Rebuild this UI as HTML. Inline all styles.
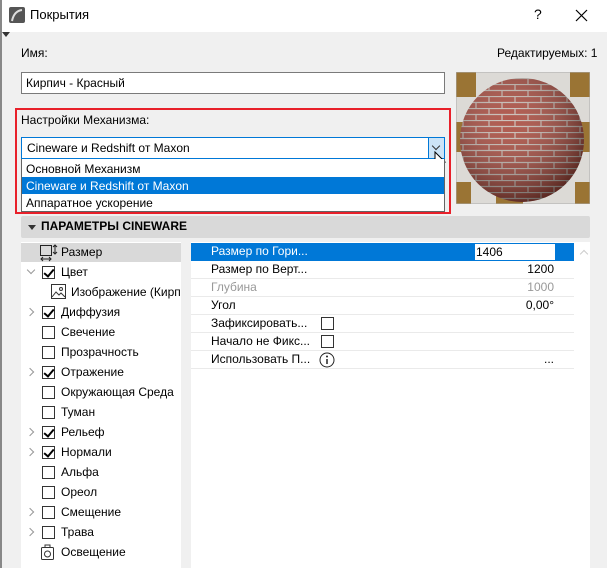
<!DOCTYPE html>
<html><head><meta charset="utf-8"><style>
*{margin:0;padding:0;box-sizing:border-box}
body{width:607px;height:568px;overflow:hidden;background:#f0f0f0;font-family:"Segoe UI","Liberation Sans","DejaVu Sans",sans-serif;font-size:12px;color:#000;position:relative}
.a{position:absolute}
.title{left:0;top:0;width:607px;height:32px;background:#fff}
.cb{position:absolute;width:13px;height:13px;border:1px solid #333;background:#fff}
.chk::after{content:"";position:absolute;left:3px;top:0px;width:4px;height:8px;border:solid #000;border-width:0 2px 2px 0;transform:rotate(40deg)}
.arr{position:absolute;width:6px;height:6px;border:solid #999;border-width:0 1.5px 1.5px 0}
.row{position:absolute;left:191px;width:383px;height:18px;border-bottom:1px solid #eaeaea;line-height:17px}
.row .l{position:absolute;left:20px}
.row .v{position:absolute;right:20px}
.lt{position:absolute;left:40px;line-height:20px;white-space:nowrap}
</style></head><body>
<div class="a title"></div>
<div class="a" style="left:0;top:0;width:2px;height:568px;background:#888"></div>
<div class="a" style="left:2px;top:32px;width:0;height:0;border-left:4px solid transparent;border-right:4px solid transparent;border-top:5px solid #333"></div>
<svg class="a" style="left:9px;top:7px" width="16" height="16"><rect x="0" y="0" width="16" height="16" rx="2" fill="#555"/><path d="M3 14 Q5 4 13 3" stroke="#ddd" stroke-width="2" fill="none"/></svg>
<div class="a" style="left:30px;top:7px;font-size:13px">Покрытия</div>
<div class="a" style="left:534px;top:6px;font-size:14px">?</div>
<svg class="a" style="left:575px;top:9px" width="13" height="13"><path d="M1 1L12 12M12 1L1 12" stroke="#000" stroke-width="1.2"/></svg>

<div class="a" style="left:21px;top:46px">Имя:</div>
<div class="a" style="left:497px;top:46px">Редактируемых: 1</div>
<div class="a" style="left:21px;top:72px;width:424px;height:22px;background:#fff;border:1px solid #7a7a7a;padding-left:4px;line-height:20px">Кирпич - Красный</div>

<div class="a" style="left:15px;top:108px;width:436px;height:106px;border:2px solid #e8202a"></div>
<div class="a" style="left:21px;top:113px">Настройки Механизма:</div>
<div class="a" style="left:21px;top:137px;width:424px;height:22px;background:#fff;border:1px solid #0078d7;padding-left:5px;line-height:20px">Cineware и Redshift от Maxon</div>
<div class="a" style="left:428px;top:137px;width:17px;height:22px;background:#cce4f7;border:1px solid #0078d7"></div>
<div class="arr" style="left:433px;top:143px;transform:rotate(45deg);border-color:#333;border-width:0 1px 1px 0"></div>
<svg class="a" style="left:434px;top:151px" width="14" height="20"><path d="M1 1L1 15L4 12L7 18L9 17L6 11L11 11Z" fill="#fff" stroke="#000"/></svg>
<div class="a" style="left:21px;top:159px;width:424px;height:53px;background:#fff;border:1px solid #646464;border-top:none"></div>
<div class="a" style="left:26px;top:161px;line-height:16px">Основной Механизм</div>
<div class="a" style="left:22px;top:177px;width:422px;height:17px;background:#0078d7"></div>
<div class="a" style="left:26px;top:178px;line-height:16px;color:#fff">Cineware и Redshift от Maxon</div>
<div class="a" style="left:26px;top:195px;line-height:16px">Аппаратное ускорение</div>

<svg class="a" style="left:456px;top:72px" width="134" height="132">
<defs>
<pattern id="br" width="26" height="12" patternUnits="userSpaceOnUse"><rect width="26" height="12" fill="#a8473a"/><path d="M0 0.5H26M0 6.5H26M7 0V6M20 6V12" stroke="#c8bcb4" stroke-width="1.2"/></pattern>
<radialGradient id="sh" cx="0.4" cy="0.35" r="0.7"><stop offset="0" stop-color="#fff" stop-opacity="0.1"/><stop offset="1" stop-color="#000" stop-opacity="0.5"/></radialGradient>
</defs>
<rect width="134" height="132" fill="#dcdad6"/>
<path d="M0 0H20V25H0ZM114 0H134V25H114ZM0 50H12V80H0ZM122 50H134V80H122ZM0 110H15V132H0ZM119 110H134V132H119ZM40 112H67V132H40ZM67 100H94V112H67Z" fill="#9a7434"/>
<rect x="0" y="0" width="134" height="132" fill="none" stroke="#aaa"/>
<circle cx="66" cy="68" r="62" fill="url(#br)"/>
<circle cx="66" cy="68" r="62" fill="url(#sh)"/>
</svg>

<div class="a" style="left:21px;top:216px;width:569px;height:22px;background:#d9d9d9;border-radius:2px"></div>
<div class="a" style="left:28px;top:225px;border-left:4px solid transparent;border-right:4px solid transparent;border-top:5px solid #333"></div>
<div class="a" style="left:41px;top:219px;font-weight:bold;font-size:12px">ПАРАМЕТРЫ CINEWARE</div>

<div class="a" style="left:21px;top:242px;width:160px;height:326px;background:#fff"></div>
<div class="a" style="left:21px;top:243px;width:160px;height:19px;background:#d9d9d9"></div>
<svg class="a" style="left:39px;top:244px" width="20" height="18"><rect x="1.5" y="1.5" width="11" height="10" fill="none" stroke="#222"/><path d="M16 1V10M14 3L16 1L18 3M14 8L16 10L18 8M2 15H12M4 13L2 15L4 17M10 13L12 15L10 17" stroke="#222" fill="none"/></svg>
<div class="a" style="left:21px;top:242px;width:160px;height:326px;overflow:hidden">
<div class="lt" style="top:0">Размер</div>
<div class="lt" style="top:20px">Цвет</div>
<div class="lt" style="top:40px;left:50px">Изображение (Кирпич</div>
<div class="lt" style="top:60px">Диффузия</div>
<div class="lt" style="top:80px">Свечение</div>
<div class="lt" style="top:100px">Прозрачность</div>
<div class="lt" style="top:120px">Отражение</div>
<div class="lt" style="top:140px">Окружающая Среда</div>
<div class="lt" style="top:160px">Туман</div>
<div class="lt" style="top:180px">Рельеф</div>
<div class="lt" style="top:200px">Нормали</div>
<div class="lt" style="top:220px">Альфа</div>
<div class="lt" style="top:240px">Ореол</div>
<div class="lt" style="top:260px">Смещение</div>
<div class="lt" style="top:280px">Трава</div>
<div class="lt" style="top:300px">Освещение</div>
</div>
<div class="cb chk" style="left:42px;top:266px"></div>
<div class="cb chk" style="left:42px;top:306px"></div>
<div class="cb" style="left:42px;top:326px"></div>
<div class="cb" style="left:42px;top:346px"></div>
<div class="cb chk" style="left:42px;top:366px"></div>
<div class="cb" style="left:42px;top:386px"></div>
<div class="cb" style="left:42px;top:406px"></div>
<div class="cb chk" style="left:42px;top:426px"></div>
<div class="cb chk" style="left:42px;top:446px"></div>
<div class="cb" style="left:42px;top:466px"></div>
<div class="cb" style="left:42px;top:486px"></div>
<div class="cb" style="left:42px;top:506px"></div>
<div class="cb" style="left:42px;top:526px"></div>
<div class="arr" style="left:28px;top:267px;transform:rotate(45deg)"></div>
<div class="arr" style="left:27px;top:309px;transform:rotate(-45deg)"></div>
<div class="arr" style="left:27px;top:369px;transform:rotate(-45deg)"></div>
<div class="arr" style="left:27px;top:429px;transform:rotate(-45deg)"></div>
<div class="arr" style="left:27px;top:449px;transform:rotate(-45deg)"></div>
<div class="arr" style="left:27px;top:509px;transform:rotate(-45deg)"></div>
<div class="arr" style="left:27px;top:529px;transform:rotate(-45deg)"></div>
<svg class="a" style="left:51px;top:284px" width="16" height="16"><rect x="0.5" y="0.5" width="14" height="14" fill="#fff" stroke="#333"/><path d="M1 13L5 8L8 11L10 9L14 13" stroke="#333" fill="none"/><circle cx="10" cy="5" r="1.5" fill="none" stroke="#333"/></svg>
<svg class="a" style="left:41px;top:544px" width="14" height="17"><rect x="0.5" y="3.5" width="12" height="12" rx="1" fill="#fff" stroke="#333"/><path d="M4 3V1H9V3" stroke="#333" fill="none"/><circle cx="6.5" cy="10" r="3" fill="none" stroke="#333"/></svg>

<div class="a" style="left:191px;top:242px;width:399px;height:326px;background:#fff"></div>
<div class="arr" style="left:581px;top:251px;transform:rotate(-135deg);border-color:#ccc"></div>
<div class="row" style="top:243px;background:#0078d7;color:#fff;border-bottom:none"><span class="l">Размер по Гори...</span></div>
<div class="a" style="left:475px;top:244px;width:80px;height:16px;background:#fff;padding-left:1px;line-height:16px">1406</div>
<div class="row" style="top:261px"><span class="l">Размер по Верт...</span><span class="v">1200</span></div>
<div class="row" style="top:279px;color:#999"><span class="l">Глубина</span><span class="v">1000</span></div>
<div class="row" style="top:297px"><span class="l">Угол</span><span class="v">0,00°</span></div>
<div class="row" style="top:315px"><span class="l">Зафиксировать...</span></div>
<div class="row" style="top:333px"><span class="l">Начало не Фикс...</span></div>
<div class="row" style="top:351px"><span class="l">Использовать П...</span><span class="v">...</span></div>
<div class="cb" style="left:321px;top:317px"></div>
<div class="cb" style="left:321px;top:335px"></div>
<svg class="a" style="left:319px;top:352px" width="16" height="16"><circle cx="8" cy="8" r="7" fill="none" stroke="#222"/><path d="M8 7V12" stroke="#222" stroke-width="1.5"/><circle cx="8" cy="4.5" r="1" fill="#222"/></svg>
</body></html>
